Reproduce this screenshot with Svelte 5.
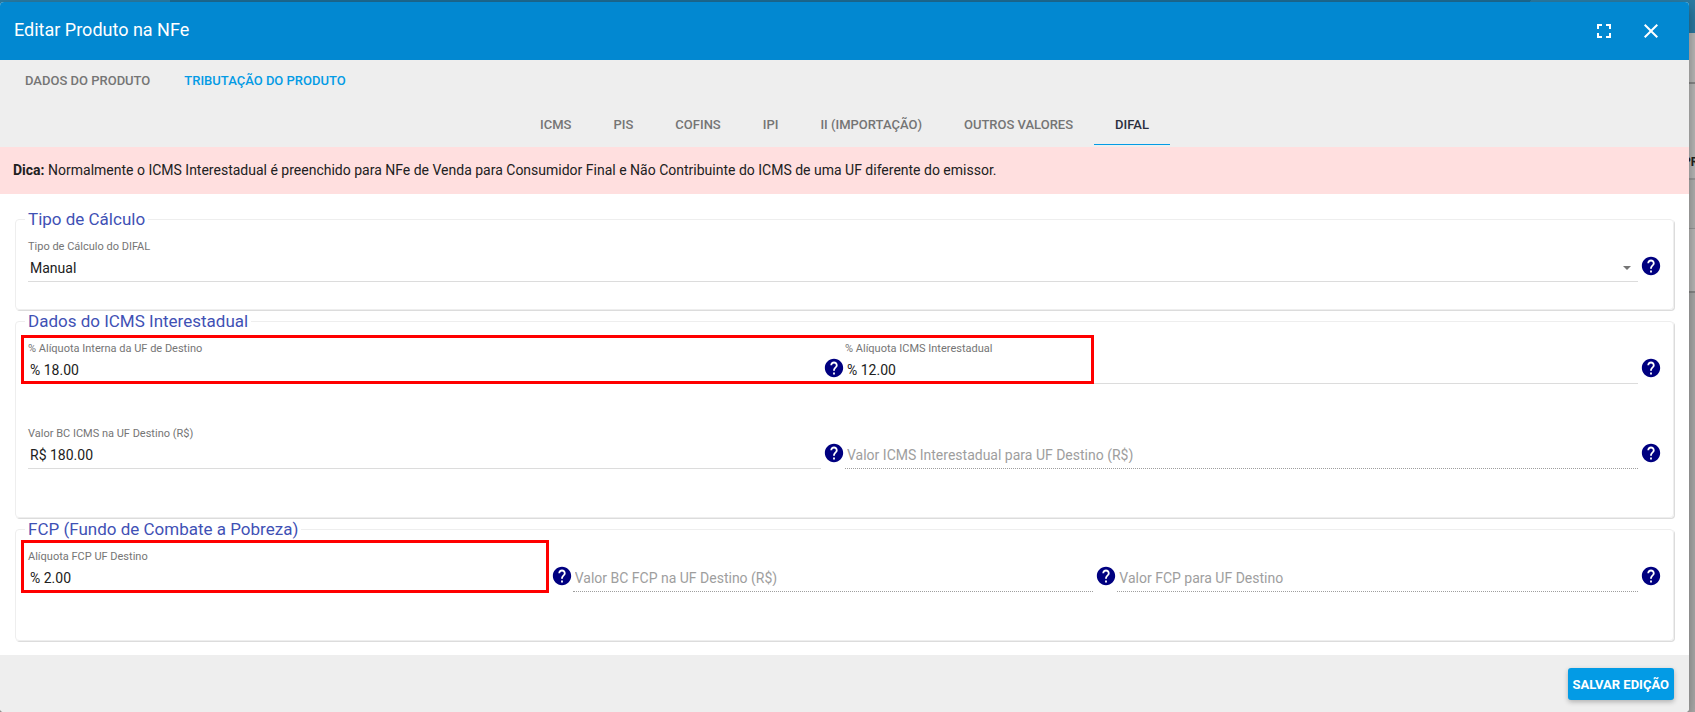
<script>
    let mainTab = $state('TRIBUTAÇÃO DO PRODUTO')
    let taxTab = $state('DIFAL')
    let calcType = $state('Manual')

    const mainTabs = ['DADOS DO PRODUTO', 'TRIBUTAÇÃO DO PRODUTO']
    const taxTabs = ['ICMS', 'PIS', 'COFINS', 'IPI', 'II (IMPORTAÇÃO)', 'OUTROS VALORES', 'DIFAL']

    let icms = $state([
        [
            { id: 'aliq-interna', label: '% Alíquota Interna da UF de Destino', value: '% 18.00' },
            { id: 'aliq-inter', label: '% Alíquota ICMS Interestadual', value: '% 12.00' }
        ],
        [
            { id: 'bc-icms', label: 'Valor BC ICMS na UF Destino (R$)', value: 'R$ 180.00' },
            { id: 'valor-icms', label: 'Valor ICMS Interestadual para UF Destino (R$)', value: '', disabled: true }
        ]
    ])

    let fcp = $state([
        { id: 'aliq-fcp', label: 'Alíquota FCP UF Destino', value: '% 2.00', marked: true },
        { id: 'bc-fcp', label: 'Valor BC FCP na UF Destino (R$)', value: '', disabled: true },
        { id: 'valor-fcp', label: 'Valor FCP para UF Destino', value: '', disabled: true }
    ])
</script>

{#snippet help()}
    <button type="button" class="help" aria-label="Ajuda">
        <svg viewBox="0 0 24 24"><path d="M12 2C6.48 2 2 6.48 2 12s4.48 10 10 10 10-4.48 10-10S17.52 2 12 2zm1 17h-2v-2h2v2zm2.07-7.75l-.9.92C13.45 12.9 13 13.5 13 15h-2v-.5c0-1.1.45-2.1 1.17-2.83l1.24-1.26c.37-.36.59-.86.59-1.41 0-1.1-.9-2-2-2s-2 .9-2 2H8c0-2.21 1.79-4 4-4s4 1.79 4 4c0 .88-.36 1.68-.93 2.25z" /></svg>
    </button>
{/snippet}

{#snippet column(field)}
    <div class="column">
        <div class="field">
            {#if field.disabled}
                <input type="text" class="empty" placeholder={field.label} aria-label={field.label} disabled />
            {:else}
                <label for={field.id}>{field.label}</label>
                <input type="text" id={field.id} bind:value={field.value} />
            {/if}
        </div>
        {@render help()}
        {#if field.marked}
            <div class="mark mark-field"></div>
        {/if}
    </div>
{/snippet}

<div class="page">
    <div class="backdrop" aria-hidden="true">
        <div class="back-bar"></div>
        <div class="back-card"></div>
        <div class="back-card back-tabs"><span>PRODUTOS</span></div>
        <div class="back-card back-list"></div>
        <div class="back-card back-total"></div>
    </div>

    <div class="dialog" role="dialog" aria-labelledby="dialog-title">
        <header>
            <h2 id="dialog-title">Editar Produto na NFe</h2>
            <button type="button" class="icon" aria-label="Tela cheia">
                <svg viewBox="0 0 24 24"><path d="M7 14H5v5h5v-2H7v-3zm-2-4h2V7h3V5H5v5zm12 7h-3v2h5v-5h-2v3zM14 5v2h3v3h2V5h-5z" /></svg>
            </button>
            <button type="button" class="icon" aria-label="Fechar">
                <svg viewBox="0 0 24 24"><path d="M19 6.41L17.59 5 12 10.59 6.41 5 5 6.41 10.59 12 5 17.59 6.41 19 12 13.41 17.59 19 19 17.59 13.41 12z" /></svg>
            </button>
        </header>

        <nav class="main-tabs">
            {#each mainTabs as tab}
                <button type="button" class:active={tab === mainTab} onclick={() => (mainTab = tab)}>{tab}</button>
            {/each}
        </nav>
        <nav class="tax-tabs">
            {#each taxTabs as tab}
                <button type="button" class:active={tab === taxTab} onclick={() => (taxTab = tab)}>{tab}</button>
            {/each}
        </nav>

        <p class="hint">
            <strong>Dica:</strong> Normalmente o ICMS Interestadual é preenchido para NFe de Venda para Consumidor Final e Não Contribuinte do ICMS de uma UF diferente do emissor.
        </p>

        <form>
            <fieldset class="short">
                <legend>Tipo de Cálculo</legend>
                <div class="row">
                    <div class="column">
                        <div class="field">
                            <label for="tipo-calculo">Tipo de Cálculo do DIFAL</label>
                            <div class="select">
                                <select id="tipo-calculo" bind:value={calcType}>
                                    <option>Manual</option>
                                    <option>Automático</option>
                                </select>
                                <svg viewBox="0 0 8 4"><path d="M0 0h8L4 4z" /></svg>
                            </div>
                        </div>
                        {@render help()}
                    </div>
                </div>
            </fieldset>

            <fieldset>
                <legend>Dados do ICMS Interestadual</legend>
                {#each icms as row, i}
                    <div class="row">
                        {#each row as field}
                            {@render column(field)}
                        {/each}
                        {#if i === 0}
                            <div class="mark mark-row"></div>
                        {/if}
                    </div>
                {/each}
            </fieldset>

            <fieldset>
                <legend>FCP (Fundo de Combate a Pobreza)</legend>
                <div class="row">
                    {#each fcp as field}
                        {@render column(field)}
                    {/each}
                </div>
            </fieldset>
        </form>

        <footer>
            <button type="button" class="save">SALVAR EDIÇÃO</button>
        </footer>
    </div>
</div>

<style>
    :global(body) {
        margin: 0;
        background: #adadac;
    }

    .page {
        position: relative;
        min-height: 100vh;
        box-sizing: border-box;
        padding: 2px 6px 0 0;
        overflow: hidden;
        font-family: Roboto, "Liberation Sans", sans-serif;
        color: #212121;
    }

    button {
        padding: 0;
        border: none;
        background: none;
        font-family: inherit;
        cursor: pointer;
    }

    svg {
        display: block;
        fill: currentColor;
    }

    /* dimmed page under the dialog */
    .backdrop {
        position: absolute;
        inset: 0;
    }

    .back-bar {
        height: 33px;
        background: linear-gradient(100deg, #2a7ba3 0 10%, #1d6b93 10% 90%, #2b7ba3 90%);
    }

    .back-card {
        height: 49px;
        background: #bbbbba;
        border-bottom: 2px solid #8a8a8a;
    }

    .back-tabs {
        display: flex;
        align-items: flex-end;
        justify-content: flex-end;
        height: 94px;
        border-bottom-color: #9c9c9c;
    }

    .back-tabs span {
        width: 12px;
        padding-bottom: 9px;
        overflow: hidden;
        font-size: 12px;
        font-weight: 700;
    }

    .back-list {
        height: 48px;
        background: #b3b3b2;
        border-bottom: 1px solid #999;
    }

    .back-total {
        height: 62px;
    }

    .dialog {
        position: relative;
        background: #fff;
        border-radius: 4px;
        overflow: hidden;
        box-shadow: 0 7px 8px rgba(0, 0, 0, 0.2), 0 5px 22px rgba(0, 0, 0, 0.2);
    }

    header {
        display: flex;
        align-items: center;
        gap: 23px;
        height: 58px;
        padding: 0 26px 0 14px;
        background: #0288d1;
        color: #fff;
    }

    h2 {
        flex: 1;
        margin: 0;
        padding-bottom: 4px;
        font-size: 18px;
        font-weight: 400;
    }

    .icon {
        width: 24px;
        height: 24px;
        color: #fff;
    }

    nav {
        display: flex;
        background: #eee;
    }

    nav button {
        height: 41px;
        border-bottom: 1px solid transparent;
        font-size: 13px;
        font-weight: 500;
        color: #757575;
    }

    .main-tabs {
        padding: 0 8px;
    }

    .main-tabs button {
        padding: 0 17px;
    }

    .main-tabs .active {
        color: #039be5;
    }

    .tax-tabs {
        justify-content: center;
        padding: 3px 0 2px;
    }

    .tax-tabs button {
        padding: 0 21px;
    }

    .tax-tabs .active {
        border-bottom-color: #039be5;
        color: #2b2f3e;
    }

    .hint {
        margin: 0;
        padding: 13px;
        background: #ffdfdf;
        font-size: 14px;
        line-height: 21px;
    }

    form {
        padding: 15px 15px 13px;
    }

    fieldset {
        min-width: 0;
        margin: 0 0 1px;
        padding: 10px 11px 48px 12px;
        border: 1px solid #eee;
        border-radius: 4px;
        box-shadow: 1px 1px 0 #dcdcdc;
    }

    .short {
        padding-bottom: 27px;
    }

    legend {
        margin-left: -3px;
        padding: 0 3px;
        font-size: 17px;
        line-height: 20px;
        color: #3f51b5;
    }

    .row {
        position: relative;
        display: flex;
    }

    .row + .row {
        margin-top: 42px;
    }

    .column {
        position: relative;
        display: flex;
        flex: 1;
        align-items: flex-end;
        gap: 2px;
    }

    .field {
        display: flex;
        flex: 1;
        flex-direction: column;
        justify-content: flex-end;
        height: 43px;
    }

    label {
        height: 15px;
        font-size: 11px;
        line-height: 15px;
        color: #757575;
    }

    input,
    .select {
        box-sizing: border-box;
        width: 100%;
        height: 28px;
        padding: 0 2px;
        border: none;
        border-bottom: 1px solid #dcdcdc;
        border-radius: 0;
        background: none;
        font-family: inherit;
        font-size: 14px;
        color: #212121;
        outline: none;
    }

    .empty {
        border-bottom: 1px dotted #9e9e9e;
    }

    .empty::placeholder {
        color: #9e9e9e;
        opacity: 1;
    }

    .select {
        display: flex;
        align-items: center;
        padding-right: 7px;
    }

    .select svg {
        width: 8px;
        height: 4px;
        color: #757575;
    }

    select {
        flex: 1;
        height: 27px;
        padding: 0;
        border: none;
        appearance: none;
        background: none;
        font: inherit;
        color: inherit;
        outline: none;
    }

    .help {
        width: 22px;
        height: 22px;
        margin-bottom: 5px;
        color: #000080;
    }

    /* red frames around the rates to be filled in */
    .mark {
        position: absolute;
        left: -7px;
        box-sizing: border-box;
        border: 3px solid #f00;
        pointer-events: none;
    }

    .mark-row {
        top: -6px;
        bottom: 0;
        width: calc(66% - 5px);
    }

    .mark-field {
        top: -9px;
        right: 24px;
        bottom: -1px;
    }

    footer {
        display: flex;
        justify-content: flex-end;
        padding: 13px 15px 12px;
        background: #eee;
    }

    .save {
        height: 32px;
        padding: 0 5px;
        border-radius: 3px;
        background: #039be5;
        box-shadow: 0 2px 5px rgba(0, 0, 0, 0.26);
        font-size: 13px;
        font-weight: 700;
        color: #fff;
    }
</style>
